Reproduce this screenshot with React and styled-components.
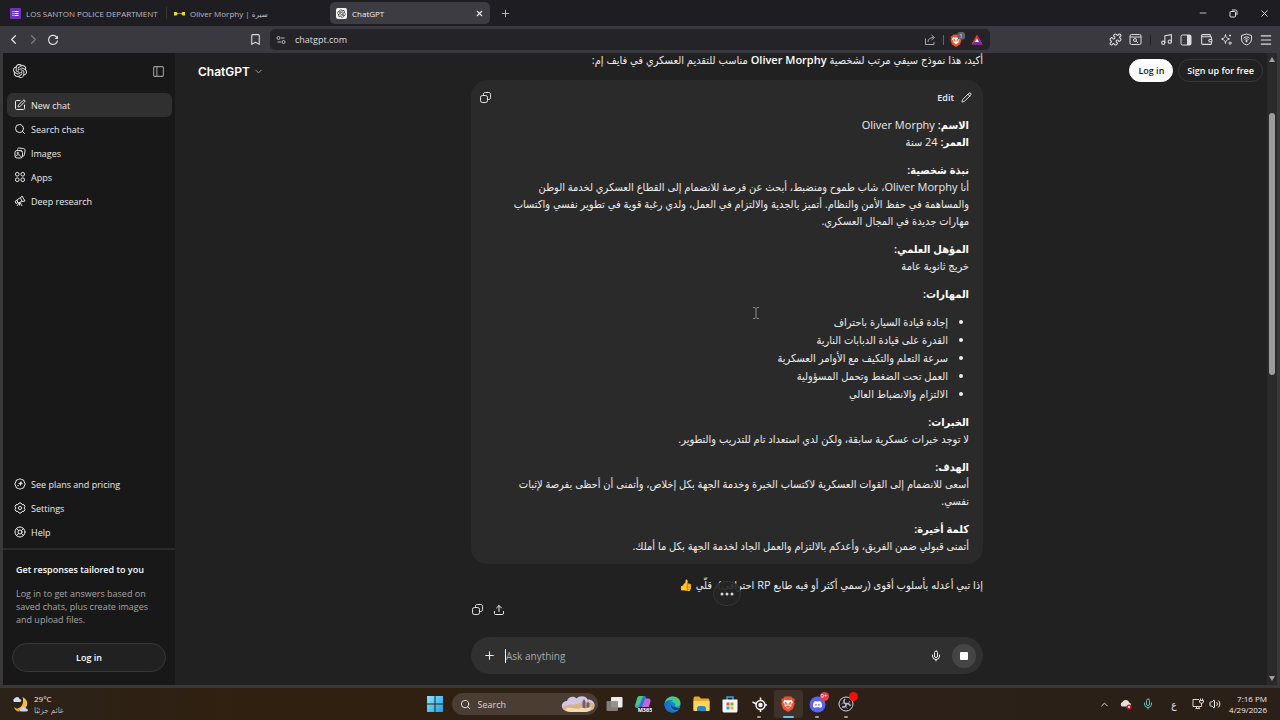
import styled, { createGlobalStyle, css } from "styled-components";
import {
  Bookmark, ChevronDown, ChevronLeft, ChevronRight, ChevronUp, LifeBuoy, Menu, Mic, Minus,
  Music, PanelLeft, Pencil, Plus, Puzzle, Search, SquarePen, Upload, Volume2, Wallet, X,
} from "lucide-react";
import { FaDiscord } from "react-icons/fa";

const GlobalStyle = createGlobalStyle`
  *, *::before, *::after {
    box-sizing: border-box;
  }
  body {
    margin: 0;
    background: #1e1d22;
    color: #ececec;
    font-family: "Open Sans", "DejaVu Sans Condensed", "DejaVu Sans", sans-serif;
    font-size: 9px;
  }
  button, input {
    font: inherit;
    color: inherit;
    border: 0;
    padding: 0;
    margin: 0;
    background: none;
  }
  b {
    font-weight: 600;
    color: #fff;
  }
  svg {
    display: block;
    flex: none;
  }
`;

const Desktop = styled.div`
  display: flex;
  flex-direction: column;
  height: 100vh;
  overflow: hidden;
`;

/* ---------- tab strip ---------- */

const TabStrip = styled.div`
  display: flex;
  align-items: center;
  height: 26px;
  padding-left: 4px;
  background: #1e1d22;
`;

const Tab = styled.button`
  display: flex;
  align-items: center;
  gap: 5px;
  flex: 0 1 160px;
  min-width: 0;
  height: 22px;
  margin-right: 2px;
  padding: 0 6px;
  border-radius: 5px;
  font-size: 8px;
  color: ${(p) => (p.$active ? "#f0f0f2" : "#bdbcc2")};
  background: ${(p) => (p.$active ? "#3d3c42" : "transparent")};
  text-align: left;
  white-space: nowrap;
`;

const TabTitle = styled.span`
  flex: 1;
`;

const TabDivider = styled.span`
  width: 1px;
  height: 12px;
  margin-right: 1px;
  background: #35343a;
`;

const TabButton = styled.button`
  display: grid;
  place-items: center;
  width: 26px;
  height: 22px;
  color: #bdbcc2;
`;

const WindowButtons = styled.div`
  display: flex;
  margin-left: auto;
`;

const WindowButton = styled.button`
  display: grid;
  place-items: center;
  width: 31px;
  height: 26px;
  color: #dedee0;
`;

/* ---------- toolbar ---------- */

const Toolbar = styled.div`
  display: grid;
  grid-template-columns: 270px minmax(0, 1fr) 290px;
  align-items: center;
  height: 27px;
  background: #3a393f;
`;

const ToolGroup = styled.div`
  display: flex;
  align-items: center;
  padding: ${(p) => (p.$end ? "0 4px 0 0" : "0 5px 0 3px")};
  justify-content: ${(p) => (p.$end ? "flex-end" : "flex-start")};
`;

const ToolButton = styled.button`
  display: grid;
  place-items: center;
  width: 20px;
  height: 20px;
  color: ${(p) => (p.$dim ? "#7b7a80" : "#dddce0")};
  ${(p) => p.$push && css`margin-left: auto;`}
`;

const ToolDivider = styled.span`
  width: 1px;
  height: 10px;
  margin: 0 ${(p) => p.$space || 5}px;
  background: ${(p) => (p.$light ? "#66656b" : "#242328")};
`;

const AddressBar = styled.div`
  display: flex;
  align-items: center;
  height: 21px;
  padding: 0 3px 0 6px;
  border-radius: 5px;
  background: #242328;
`;

const AddressInput = styled.input`
  flex: 1;
  min-width: 0;
  margin-left: 9px;
  font-size: 9px;
  color: #dcdce0;
  outline: none;
`;

/* ---------- page ---------- */

const PageFrame = styled.div`
  display: flex;
  flex: 1;
  min-height: 0;
  border: 3px solid #3a383b;
  border-top: 0;
  border-bottom-color: #3b3735;
`;

const Sidebar = styled.aside`
  display: flex;
  flex-direction: column;
  flex: 0 0 172px;
  background: #181818;
`;

const SidebarHead = styled.div`
  display: flex;
  align-items: center;
  justify-content: space-between;
  height: 36px;
  padding: 0 10px;
  margin-bottom: 4px;
`;

const IconButton = styled.button`
  display: grid;
  place-items: center;
  color: ${(p) => p.$color || "#ececec"};
`;

const Nav = styled.nav`
  display: flex;
  flex-direction: column;
  padding: 0 3px 0 4px;
`;

const NavItem = styled.a`
  display: flex;
  align-items: center;
  gap: 5px;
  height: 24px;
  padding: 0 7px;
  border-radius: 6px;
  color: #ececec;
  text-decoration: none;
  background: ${(p) => (p.$active ? "#303030" : "transparent")};
`;

const Spacer = styled.div`
  flex: 1;
`;

const Promo = styled.section`
  margin-top: 4px;
  padding: 13px 9px;
  border-top: 2px solid #2b2b2b;
`;

const PromoTitle = styled.h2`
  margin: 0 4px 10px;
  font-size: 9px;
  line-height: 14px;
  font-weight: 600;
  color: #fff;
`;

const PromoText = styled.p`
  margin: 0 4px 17px;
  line-height: 13px;
  color: #a6a6a6;
`;

const PillButton = styled.button`
  height: ${(p) => (p.$wide ? 29 : 23)}px;
  width: ${(p) => (p.$wide ? "100%" : "auto")};
  padding: 0 8px;
  border-radius: 15px;
  border: 1px solid ${(p) => (p.$solid ? "#fff" : "#383838")};
  color: ${(p) => (p.$solid ? "#111" : "#fff")};
  background: ${(p) => (p.$solid ? "#fff" : p.$wide ? "#212121" : "transparent")};
  font-weight: 600;
  white-space: nowrap;
`;

const Main = styled.main`
  display: grid;
  grid-template-columns: minmax(0, 1fr) minmax(0, 512px) minmax(0, 1fr);
  flex: 1;
  min-width: 0;
  padding-left: 2px;
  overflow: hidden;
  background: #212121;
`;

const ModelButton = styled.button`
  display: flex;
  align-items: center;
  align-self: start;
  gap: 3px;
  height: 36px;
  margin-left: 21px;
  font-family: Inter, sans-serif;
  font-size: 12px;
  font-weight: 600;
  color: #fff;
`;

const RightColumn = styled.div`
  display: flex;
  align-items: stretch;
  justify-content: flex-end;
`;

const AuthButtons = styled.div`
  display: flex;
  gap: 5px;
  height: 23px;
  margin: 6px 4px 0 0;
`;

const ScrollTrack = styled.div`
  display: flex;
  flex-direction: column;
  align-items: center;
  flex: 0 0 10px;
  padding: 4px 0;
  background: #2a2a2a;
`;

const ScrollThumb = styled.div`
  width: 6px;
  height: 262px;
  margin-top: 51px;
  border-radius: 3px;
  background: #9b9b9b;
`;

const ScrollArrow = styled.span`
  width: 0;
  height: 0;
  border: 3px solid transparent;
  ${(p) => (p.$down
    ? css`margin-top: auto; border-top: 5px solid #9f9f9f; border-bottom: 0;`
    : css`border-bottom: 5px solid #9f9f9f; border-top: 0;`)}
`;

/* the conversation is scrolled, so its first line starts just under the toolbar */
const Thread = styled.div`
  position: relative;
  display: flex;
  flex-direction: column;
  min-height: 0;
  margin-top: -2px;
  padding-bottom: 11px;
`;

const Line = styled.p`
  margin: 0;
  font-size: 11px;
  line-height: 17px;
  direction: rtl;
  color: #ececec;
`;

const Card = styled.article`
  margin: 12px 0;
  padding: 7px 14px 10px;
  border-radius: 16px;
  background: #2a2a2a;
`;

const CardHead = styled.header`
  display: flex;
  align-items: center;
  justify-content: space-between;
  height: 20px;
  margin: 0 -3px 9px -6px;
`;

const EditButton = styled.button`
  display: flex;
  align-items: center;
  gap: 7px;
  font-weight: 600;
`;

const CardBody = styled.div`
  display: flex;
  flex-direction: column;
  gap: 11px;
`;

const Skills = styled.ul`
  display: flex;
  flex-direction: column;
  gap: 1px;
  margin: 0;
  padding: 0 21px 0 0;
  direction: rtl;
  font-size: 11px;
  line-height: 17px;
`;

const MessageActions = styled.div`
  display: flex;
  gap: 9px;
  margin: 10px 0 0;
`;

const Composer = styled.form`
  display: flex;
  align-items: center;
  height: 37px;
  margin-top: auto;
  padding: 0 7px 0 12px;
  border-radius: 19px;
  background: #303030;
`;

const Caret = styled.span`
  width: 1px;
  height: 14px;
  margin-left: 9px;
  background: #fff;
`;

const PromptInput = styled.input`
  flex: 1;
  min-width: 0;
  font-size: 10px;
  outline: none;
  &::placeholder {
    color: #a9a9a9;
    opacity: 1;
  }
`;

const StopButton = styled.button`
  display: grid;
  place-items: center;
  width: 24px;
  height: 24px;
  margin-left: 10px;
  border-radius: 50%;
  background: #454545;
`;

const JumpButton = styled.button`
  position: absolute;
  left: calc(50% - 14px);
  bottom: 79px;
  display: grid;
  place-items: center;
  width: 28px;
  height: 25px;
  border: 1px solid #363636;
  border-radius: 13px;
  background: #242424e8;
`;

const TextCursor = styled.svg`
  position: absolute;
  left: 282px;
  top: 256px;
`;

/* ---------- taskbar ---------- */

const Taskbar = styled.footer`
  display: grid;
  grid-template-columns: 1fr auto 1fr;
  align-items: center;
  height: 32px;
  padding-left: 6px;
  background: linear-gradient(90deg, #2b2219, #30200f 20%, #2d2018 60%, #2a2019);
`;

const Weather = styled.div`
  display: flex;
  align-items: center;
  gap: 5px;
  padding-left: 6px;
  font-size: 8px;
  line-height: 11px;
`;

const WeatherText = styled.div`
  color: ${(p) => (p.$muted ? "#b9b2ab" : "#f0eeeb")};
`;

const Apps = styled.div`
  display: flex;
  align-items: center;
`;

const SearchBox = styled.label`
  display: flex;
  align-items: center;
  gap: 7px;
  width: 146px;
  height: 22px;
  margin: 0 2px 0 8px;
  padding: 0 2px 0 8px;
  border-radius: 11px;
  background: #4a3d33;
`;

const SearchInput = styled.input`
  flex: 1;
  min-width: 0;
  font-size: 9px;
  outline: none;
  &::placeholder {
    color: #dcd6d0;
    opacity: 1;
  }
`;

const AppButton = styled.button`
  position: relative;
  display: grid;
  place-items: center;
  width: ${(p) => (p.$start ? 18 : 29)}px;
  height: 28px;
  border-radius: 3px;
  background: ${(p) => (p.$active ? "#3f3229" : "transparent")};
  &::after {
    content: "";
    position: absolute;
    bottom: 0;
    display: ${(p) => (p.$running ? "block" : "none")};
    width: ${(p) => (p.$active ? 11 : 4)}px;
    height: 2px;
    border-radius: 1px;
    background: ${(p) => (p.$active ? "#60c4f5" : "#a39a92")};
  }
`;

const Badge = styled.span`
  position: absolute;
  top: 2px;
  right: 3px;
  width: 9px;
  height: 9px;
  border-radius: 50%;
  background: ${(p) => p.$color};
  font-size: 6px;
  line-height: 9px;
  color: #fff;
`;

const Tray = styled.div`
  display: flex;
  align-items: center;
  justify-content: flex-end;
  padding-right: 13px;
`;

const TrayButton = styled.button`
  display: grid;
  place-items: center;
  width: ${(p) => p.$w || 22}px;
  height: 24px;
  font-size: 10px;
`;

const Clock = styled.div`
  min-width: 44px;
  font-size: 8px;
  line-height: 11px;
  text-align: right;
`;

/* ---------- drawings ---------- */

const openAiPath = "M22.2819 9.8211a5.9847 5.9847 0 0 0-.5157-4.9108 6.0462 6.0462 0 0 0-6.5098-2.9A6.0651 6.0651 0 0 0 4.9807 4.1818a5.9847 5.9847 0 0 0-3.9977 2.9 6.0462 6.0462 0 0 0 .7427 7.0966 5.98 5.98 0 0 0 .511 4.9107 6.051 6.051 0 0 0 6.5146 2.9001A5.9847 5.9847 0 0 0 13.2599 24a6.0557 6.0557 0 0 0 5.7718-4.2058 5.9894 5.9894 0 0 0 3.9977-2.9001 6.0557 6.0557 0 0 0-.7475-7.0729zm-9.022 12.6081a4.4755 4.4755 0 0 1-2.8764-1.0408l.1419-.0804 4.7783-2.7582a.7948.7948 0 0 0 .3927-.6813v-6.7369l2.02 1.1686a.071.071 0 0 1 .038.052v5.5826a4.504 4.504 0 0 1-4.4945 4.4944zm-9.6607-4.1254a4.4708 4.4708 0 0 1-.5346-3.0137l.142.0852 4.783 2.7582a.7712.7712 0 0 0 .7806 0l5.8428-3.3685v2.3324a.0804.0804 0 0 1-.0332.0615L9.74 19.9502a4.4992 4.4992 0 0 1-6.1408-1.6464zM2.3408 7.8956a4.485 4.485 0 0 1 2.3655-1.9728V11.6a.7664.7664 0 0 0 .3879.6765l5.8144 3.3543-2.0201 1.1685a.0757.0757 0 0 1-.071 0l-4.8303-2.7865A4.504 4.504 0 0 1 2.3408 7.872zm16.5963 3.8558L13.1038 8.364 15.1192 7.2a.0757.0757 0 0 1 .071 0l4.8303 2.7913a4.4944 4.4944 0 0 1-.6765 8.1042v-5.6772a.79.79 0 0 0-.407-.667zm2.0107-3.0231l-.142-.0852-4.7735-2.7818a.7759.7759 0 0 0-.7854 0L9.409 9.2297V6.8974a.0662.0662 0 0 1 .0284-.0615l4.8303-2.7866a4.4992 4.4992 0 0 1 6.6802 4.66zM8.3065 12.863l-2.02-1.1638a.0804.0804 0 0 1-.038-.0567V6.0742a4.4992 4.4992 0 0 1 7.3757-3.4537l-.142.0805L8.704 5.459a.7948.7948 0 0 0-.3927.6813zm1.0976-2.3654l2.602-1.4998 2.6069 1.4998v2.9994l-2.5974 1.4997-2.6067-1.4997Z";

const OpenAiLogo = () => (
  <svg width="14" height="14" viewBox="0 0 24 24">
    <path fill="#ececec" d={openAiPath} />
  </svg>
);

const ChatFavicon = () => (
  <svg width="11" height="11" viewBox="0 0 22 22">
    <rect width="22" height="22" rx="4" fill="#f4f4f4" />
    <g transform="translate(3 3) scale(.67)"><path fill="#222" d={openAiPath} /></g>
  </svg>
);

const FormFavicon = () => (
  <svg width="11" height="11" viewBox="0 0 22 22">
    <rect width="22" height="22" rx="2" fill="#6c35b5" />
    <path d="M5 7h2M9 7h8M5 11h2M9 11h8M5 15h2M9 15h8" stroke="#fff" strokeWidth="2" />
  </svg>
);

const DotsFavicon = () => (
  <svg width="11" height="11" viewBox="0 0 22 22">
    <path d="M0 8h5l3 3-3 4H0zM22 8h-5l-3 3 3 4h5z" fill="#ecdc21" />
    <path d="M7 11h8" stroke="#9c9220" strokeWidth="2" />
  </svg>
);

const ReloadIcon = () => (
  <svg width="12" height="12" viewBox="0 0 24 24" fill="none" stroke="currentColor" strokeWidth="2.4">
    <path d="M21 13a9 9 0 1 1-3-8l3 3" />
    <path d="M22 3v7h-7z" fill="currentColor" stroke="none" />
  </svg>
);

const SiteIcon = () => (
  <svg width="10" height="10" viewBox="0 0 20 20" fill="none" stroke="#bdbcc2" strokeWidth="2">
    <circle cx="5" cy="6" r="3" /><path d="M10 6h7M3 14h7" /><circle cx="15" cy="14" r="3" />
  </svg>
);

const ShareArrow = () => (
  <svg width="12" height="12" viewBox="0 0 24 24" fill="none" stroke="#aaa9af" strokeWidth="2">
    <path d="M3 9v12h17v-5M8 16c0-6 4-9 11-9M15 2l6 5-6 5" />
  </svg>
);

const BraveLion = () => (
  <svg width="16" height="16" viewBox="0 0 26 26">
    <path d="M8 1h10l3 3 3 1-1 4 1 3-3 9-8 5-8-5-3-9 1-3-1-4 3-1z" fill="#f4502a" />
    <path d="M7 6l4 1h4l4-1 2 5-3 3 1 2-4 3-2 2-2-2-4-3 1-2-3-3z" fill="#fff" />
    <path d="M8 10l3 1.500-1 3zM18 10l-3 1.500 1 3zM13 12v4M10 17l3-1 3 1-3 2z" fill="#f4502a" stroke="#f4502a" />
  </svg>
);

const ShieldCount = () => (
  <svg width="16" height="15" viewBox="0 0 32 30">
    <g transform="translate(1 4)">
      <path d="M8 1h10l3 3 3 1-1 4 1 3-3 9-8 5-8-5-3-9 1-3-1-4 3-1z" fill="#f4502a" />
      <path d="M7 6l4 1h4l4-1 2 5-3 3 1 2-4 3-2 2-2-2-4-3 1-2-3-3z" fill="#fff" />
      <path d="M8 10l3 1.500-1 3zM18 10l-3 1.500 1 3zM13 12v4" fill="#f4502a" stroke="#f4502a" />
    </g>
    <rect x="17" y="0" width="15" height="15" rx="5" fill="#63636b" />
    <text x="24" y="12" textAnchor="middle" fontSize="12" fill="#e4e4e8">1</text>
  </svg>
);

const BatTriangle = () => (
  <svg width="12" height="11" viewBox="0 0 24 22">
    <path d="M12 1L1 21h22z" fill="#ed3f2b" />
    <path d="M12 1l11 20H12z" fill="#a8268e" />
    <path d="M1 21h22l-6-5H7z" fill="#6b2fae" />
    <path d="M12 9l-4 7h8z" fill="#fff" />
  </svg>
);

const SearchTabs = () => (
  <svg width="13" height="13" viewBox="0 0 26 26" fill="none" stroke="currentColor" strokeWidth="2">
    <rect x="2" y="3" width="22" height="20" rx="3" /><path d="M2 8h22" />
    <circle cx="12" cy="14" r="3" /><path d="M14.500 16.500l3.500 3.500" />
  </svg>
);

const SidePanel = () => (
  <svg width="12" height="12" viewBox="0 0 24 24">
    <rect x="2" y="2" width="20" height="20" rx="3" fill="none" stroke="currentColor" strokeWidth="2" />
    <path d="M14 2h8v20h-8z" fill="currentColor" />
  </svg>
);

const LeoIcon = () => (
  <svg width="13" height="13" viewBox="0 0 26 26" fill="none" stroke="currentColor" strokeWidth="2">
    <path d="M11 3c1 6 2 7 8 9-6 2-7 3-8 9-1-6-2-7-8-9 6-2 7-3 8-9z" />
    <path d="M20 17v7M17 20h7M20 3v4M18 5h4" />
  </svg>
);

const VpnIcon = () => (
  <svg width="13" height="13" viewBox="0 0 26 26" fill="none" stroke="currentColor" strokeWidth="2">
    <path d="M13 2l10 3v7c0 6-4 10-10 12C7 22 3 18 3 12V5z" />
    <path d="M7 10c4-3 8-3 12 0M9 13c3-2 5-2 8 0" /><circle cx="13" cy="16" r="1.500" fill="currentColor" />
  </svg>
);

const RestoreIcon = () => (
  <svg width="9" height="9" viewBox="0 0 18 18" fill="none" stroke="currentColor" strokeWidth="2">
    <rect x="2" y="5" width="11" height="11" rx="2" /><path d="M6 2h7a3 3 0 0 1 3 3v7" />
  </svg>
);

const PhotosIcon = () => (
  <svg width="12" height="12" viewBox="0 0 24 24" fill="none" stroke="currentColor" strokeWidth="1.900">
    <path d="M7 5c0-2 1-3 3-3l9 1c2 0 3 2 3 4l-1 8c0 2-1 3-3 3" />
    <rect x="2" y="7" width="15" height="15" rx="4" /><circle cx="7.500" cy="12" r="1.500" />
    <path d="M3 19c4-5 8-5 12 2M10 7l6 1" />
  </svg>
);

const AppsIcon = () => (
  <svg width="12" height="12" viewBox="0 0 24 24" fill="none" stroke="currentColor" strokeWidth="2">
    <circle cx="6.500" cy="6.500" r="3.700" /><circle cx="17.500" cy="6.500" r="3.700" />
    <circle cx="6.500" cy="17.500" r="3.700" /><circle cx="17.500" cy="17.500" r="3.700" />
  </svg>
);

const TelescopeIcon = () => (
  <svg width="12" height="12" viewBox="0 0 24 24" fill="none" stroke="currentColor" strokeWidth="1.900" strokeLinejoin="round">
    <path d="M16 2l6 10-6 1-3-7zM13 5l-7 5 2 6 8-3M6 10l-4 3 2 4 4-2M11 15l-5 7M12 15l4 7M11 15v6" />
  </svg>
);

const PlansIcon = () => (
  <svg width="12" height="12" viewBox="0 0 24 24" fill="none" stroke="currentColor" strokeWidth="2" strokeLinejoin="round">
    <path d="M12 1.500l3 1.500 4 1 1.500 4 2 4-2 4-1.500 4-4 1-3 1.500-3-1.500-4-1-1.500-4-2-4 2-4L5 4l4-1z" />
    <path d="M14 7l1 3 2 1-3 1-1 3-1-3-3-1 3-1zM8 14v3M7 15h3" fill="currentColor" strokeWidth="1" />
  </svg>
);

const GearIcon = () => (
  <svg width="12" height="12" viewBox="0 0 24 24" fill="none" stroke="currentColor" strokeWidth="2" strokeLinejoin="round">
    <path d="M10 2h4l2 3 4 .5 2 3.500-2 3 2 3-2 3.500-4 .5-2 3h-4l-2-3-4-.5L2 15l2-3-2-3 2-3.500L8 5z" />
    <circle cx="12" cy="12" r="3.200" />
  </svg>
);

const CopyIcon = () => (
  <svg width="13" height="13" viewBox="0 0 26 26" fill="none" stroke="currentColor" strokeWidth="2">
    <rect x="3" y="9" width="14" height="14" rx="4" />
    <path d="M9 9V7c0-3 1-4 4-4h6c3 0 4 1 4 4v6c0 3-1 4-4 4h-2" />
  </svg>
);

const WeatherIcon = () => (
  <svg width="17" height="17" viewBox="0 0 34 34">
    <path d="M21 2c8 3 12 12 8 19-3 6-12 9-19 4 8 0 15-10 11-23z" fill="#f5b942" />
    <path d="M4 12a5 5 0 0 1 2-8c4-4 9-1 9 2 4 0 5 5 1 6z" fill="#cfe0f5" />
    <path d="M17 31a5 5 0 0 1 2-8c4-3 8-1 9 2 5 0 5 6 1 6z" fill="#c3d5ee" />
    <path d="M4 22c5 4 9 4 13 3l-2 6c-6 0-10-4-11-9z" fill="#f5a13a" />
  </svg>
);

const WindowsIcon = () => (
  <svg width="16" height="16" viewBox="0 0 16 16">
    <defs>
      <linearGradient id="win" x1="0" y1="0" x2="1" y2="1">
        <stop stopColor="#8be3ff" /><stop offset="1" stopColor="#1c9fe8" />
      </linearGradient>
    </defs>
    <path d="M0 0h7.500v7.500H0zM8.500 0H16v7.500H8.500zM0 8.500h7.500V16H0zM8.500 8.500H16V16H8.500z" fill="url(#win)" />
  </svg>
);

const SearchArt = () => (
  <svg width="35" height="18" viewBox="0 0 70 36">
    <path d="M6 30C-2 24 2 12 12 12 15 2 27 2 31 7c6-7 20-5 22 2 12-1 18 10 11 20z" fill="#d3c5e6" />
    <path d="M4 24c13-8 23-3 31-7s18-4 32 1c1 9-6 15-14 15H15C8 33 4 29 4 24z" fill="#d9b28b" />
    <path d="M43 30V13l3-5 3 5v17zM51 30V17l3-4 3 4v13z" fill="#705f6c" />
    <path d="M8 28c12-7 22 4 33-3 10 3 15 0 20-2-1 8-7 11-12 11H19c-5 0-9-2-11-6z" fill="#f0dcae" />
  </svg>
);

const TaskViewIcon = () => (
  <svg width="17" height="16" viewBox="0 0 34 32">
    <rect x="10" y="2" width="23" height="21" rx="2" fill="#ededed" />
    <rect x="1" y="10" width="23" height="20" rx="2" fill="#8b8782" opacity=".9" />
  </svg>
);

const CopilotIcon = () => (
  <svg width="18" height="18" viewBox="0 0 36 36">
    <path d="M11 2h9c3 0 4 2 3 5l-5 15c-1 3-3 4-6 4H6c-4 0-5-3-4-6L6 7c1-3 2-5 5-5z" fill="#26a6e6" />
    <path d="M11 2h7c-4 4-5 15-9 19H3L7 7c1-3 2-5 4-5z" fill="#54c66b" />
    <path d="M22 7h6c4 0 6 3 5 6l-3 10c-1 3-3 4-6 4h-9z" fill="#c763dc" />
    <path d="M19 2c5 0 5 5 9 5h-6l-7 19H9z" fill="#3766d6" />
    <rect x="9" y="24" width="26" height="11" fill="#2d2018" />
    <text x="22" y="34" textAnchor="middle" fontSize="11" fontWeight="700" fill="#fff">M365</text>
  </svg>
);

const EdgeIcon = () => (
  <svg width="17" height="17" viewBox="0 0 34 34">
    <circle cx="17" cy="17" r="16" fill="#1686d9" />
    <path d="M1 16C3 5 10 1 18 1c9 0 15 6 15 13 0 6-5 9-11 7 3-4-1-9-7-9S4 14 1 16z" fill="#43cf83" />
    <path d="M1 16C4 7 14 7 19 10c-7-1-10 5-8 12 2 6 8 9 14 9C12 37 0 28 1 16z" fill="#1c70c7" />
    <path d="M22 21c-3 2-7 0-6-4-5 4 1 11 8 11 3 0 6-2 7-4-3 1-6 0-9-3z" fill="#173f70" />
  </svg>
);

const FolderIcon = () => (
  <svg width="17" height="16" viewBox="0 0 34 32">
    <path d="M1 4l2-3h9l4 4h15l2 3v22H1z" fill="#e6a92d" />
    <path d="M1 10h32v18l-2 2H3l-2-2z" fill="#ffd45b" />
    <path d="M8 30v-7l3-3h12l3 3v7z" fill="#2389cf" />
  </svg>
);

const StoreIcon = () => (
  <svg width="16" height="17" viewBox="0 0 32 34">
    <path d="M10 8V2h12v6" fill="none" stroke="#31a8e8" strokeWidth="3" />
    <path d="M1 7h30v22c0 3-1 4-4 4H5c-3 0-4-1-4-4z" fill="#f3f5f7" />
    <path d="M9 13h6v6H9z" fill="#e9502d" /><path d="M17 13h6v6h-6z" fill="#73b72b" />
    <path d="M9 21h6v6H9z" fill="#29a4e8" /><path d="M17 21h6v6h-6z" fill="#f4b51e" />
  </svg>
);

const CrosshairIcon = () => (
  <svg width="15" height="15" viewBox="0 0 30 30" fill="none" stroke="#f4f4f4" strokeWidth="3">
    <circle cx="17" cy="16" r="9" /><circle cx="17" cy="16" r="3" fill="#f4f4f4" />
    <path d="M17 1v6M17 25v5M26 16h4M1 10l8 4" />
  </svg>
);

const ObsIcon = () => (
  <svg width="16" height="16" viewBox="0 0 32 32">
    <circle cx="16" cy="16" r="14" fill="#211e22" stroke="#d7d7d7" strokeWidth="2" />
    <path d="M14 6c-4 4-2 9 2 10M25 20c-2-5-7-6-9-4M8 22c6 1 9-2 8-6" fill="none" stroke="#bfbfc3" strokeWidth="3" />
    <path d="M16 16c4 0 7-2 7-6M16 16c-2 4 0 8 3 9M16 16c-3-3-7-3-9 0" fill="none" stroke="#bfbfc3" strokeWidth="1.500" />
  </svg>
);

const CloudIcon = () => (
  <svg width="12" height="11" viewBox="0 0 24 22">
    <path d="M4 15a5 5 0 0 1 1-9c4-7 13-4 13 1 5 1 5 8 0 8z" fill="#e4e0dc" />
    <circle cx="18" cy="16" r="5" fill="#d41635" /><path d="M16 14l4 4m0-4l-4 4" stroke="#fff" strokeWidth="1.500" />
  </svg>
);

const NetworkIcon = () => (
  <svg width="12" height="12" viewBox="0 0 24 24" fill="none" stroke="#ded8d2" strokeWidth="2">
    <path d="M14 3H2v14h17v-5M7 21h9M9 17v4M14 17v4M17 1v4M21 1v4M15 5h8v3c0 3-8 3-8 0zM19 10v4" />
  </svg>
);

/* ---------- data ---------- */

const mainLinks = [
  { label: "New chat", icon: <SquarePen size={12} />, active: true },
  { label: "Search chats", icon: <Search size={12} /> },
  { label: "Images", icon: <PhotosIcon /> },
  { label: "Apps", icon: <AppsIcon /> },
  { label: "Deep research", icon: <TelescopeIcon /> },
];

const footLinks = [
  { label: "See plans and pricing", icon: <PlansIcon /> },
  { label: "Settings", icon: <GearIcon /> },
  { label: "Help", icon: <LifeBuoy size={12} /> },
];

const skills = [
  "إجادة قيادة السيارة باحتراف",
  "القدرة على قيادة الدبابات النارية",
  "سرعة التعلم والتكيف مع الأوامر العسكرية",
  "العمل تحت الضغط وتحمل المسؤولية",
  "الالتزام والانضباط العالي",
];

const BrowserChrome = () => (
  <>
    <TabStrip>
      <Tab><FormFavicon /><TabTitle>LOS SANTON POLICE DEPARTMENT</TabTitle></Tab>
      <TabDivider />
      <Tab><DotsFavicon /><TabTitle>Oliver Morphy | سيرة</TabTitle></Tab>
      <Tab $active><ChatFavicon /><TabTitle>ChatGPT</TabTitle><X size={9} strokeWidth={3} /></Tab>
      <TabButton aria-label="New tab"><Plus size={11} /></TabButton>
      <WindowButtons>
        <WindowButton aria-label="Minimize"><Minus size={10} /></WindowButton>
        <WindowButton aria-label="Restore"><RestoreIcon /></WindowButton>
        <WindowButton aria-label="Close"><X size={11} /></WindowButton>
      </WindowButtons>
    </TabStrip>
    <Toolbar>
      <ToolGroup>
        <ToolButton aria-label="Back"><ChevronLeft size={15} /></ToolButton>
        <ToolButton aria-label="Forward" $dim><ChevronRight size={15} /></ToolButton>
        <ToolButton aria-label="Reload"><ReloadIcon /></ToolButton>
        <ToolButton aria-label="Bookmark" $push><Bookmark size={13} /></ToolButton>
      </ToolGroup>
      <AddressBar>
        <SiteIcon />
        <AddressInput aria-label="Address" defaultValue="chatgpt.com" />
        <ToolButton aria-label="Share"><ShareArrow /></ToolButton>
        <ToolDivider $light $space={3} />
        <ToolButton aria-label="Shields"><ShieldCount /></ToolButton>
        <ToolButton aria-label="Rewards"><BatTriangle /></ToolButton>
      </AddressBar>
      <ToolGroup $end>
        <ToolButton aria-label="Extensions"><Puzzle size={13} /></ToolButton>
        <ToolButton aria-label="Search tabs"><SearchTabs /></ToolButton>
        <ToolDivider />
        <ToolButton aria-label="Music"><Music size={13} /></ToolButton>
        <ToolButton aria-label="Side panel"><SidePanel /></ToolButton>
        <ToolButton aria-label="Wallet"><Wallet size={13} /></ToolButton>
        <ToolButton aria-label="Assistant"><LeoIcon /></ToolButton>
        <ToolButton aria-label="VPN"><VpnIcon /></ToolButton>
        <ToolButton aria-label="Menu"><Menu size={14} /></ToolButton>
      </ToolGroup>
    </Toolbar>
  </>
);

const ChatSidebar = () => (
  <Sidebar>
    <SidebarHead>
      <OpenAiLogo />
      <IconButton aria-label="Close sidebar" $color="#9b9b9b"><PanelLeft size={13} /></IconButton>
    </SidebarHead>
    <Nav>
      {mainLinks.map((link) => (
        <NavItem href="#" key={link.label} $active={link.active}>{link.icon}{link.label}</NavItem>
      ))}
    </Nav>
    <Spacer />
    <Nav>
      {footLinks.map((link) => (
        <NavItem href="#" key={link.label}>{link.icon}{link.label}</NavItem>
      ))}
    </Nav>
    <Promo>
      <PromoTitle>Get responses tailored to you</PromoTitle>
      <PromoText>Log in to get answers based on saved chats, plus create images and upload files.</PromoText>
      <PillButton $wide>Log in</PillButton>
    </Promo>
  </Sidebar>
);

const Resume = () => (
  <Card>
    <CardHead>
      <IconButton aria-label="Copy"><CopyIcon /></IconButton>
      <EditButton>Edit <Pencil size={11} /></EditButton>
    </CardHead>
    <CardBody>
      <Line><b>الاسم:</b> Oliver Morphy<br /><b>العمر:</b> 24 سنة</Line>
      <Line>
        <b>نبذة شخصية:</b><br />
        أنا Oliver Morphy، شاب طموح ومنضبط، أبحث عن فرصة للانضمام إلى القطاع العسكري لخدمة الوطن<br />
        والمساهمة في حفظ الأمن والنظام. أتميز بالجدية والالتزام في العمل، ولدي رغبة قوية في تطوير نفسي واكتساب<br />
        مهارات جديدة في المجال العسكري.
      </Line>
      <Line><b>المؤهل العلمي:</b><br />خريج ثانوية عامة</Line>
      <Line><b>المهارات:</b></Line>
      <Skills>
        {skills.map((skill) => <li key={skill}>{skill}</li>)}
      </Skills>
      <Line><b>الخبرات:</b><br />لا توجد خبرات عسكرية سابقة، ولكن لدي استعداد تام للتدريب والتطوير.</Line>
      <Line>
        <b>الهدف:</b><br />
        أسعى للانضمام إلى القوات العسكرية لاكتساب الخبرة وخدمة الجهة بكل إخلاص، وأتمنى أن أحظى بفرصة لإثبات<br />
        نفسي.
      </Line>
      <Line><b>كلمة أخيرة:</b><br />أتمنى قبولي ضمن الفريق، وأعدكم بالالتزام والعمل الجاد لخدمة الجهة بكل ما أملك.</Line>
    </CardBody>
  </Card>
);

const ChatPage = () => (
  <Main>
    <ModelButton>ChatGPT <ChevronDown size={11} color="#a5a5a5" /></ModelButton>
    <Thread>
      <Line>أكيد، هذا نموذج سيفي مرتب لشخصية <b>Oliver Morphy</b> مناسب للتقديم العسكري في فايف إم:</Line>
      <Resume />
      <Line>إذا تبي أعدله بأسلوب أقوى (رسمي أكثر أو فيه طابع RP احترافي)، قلّي 👍</Line>
      <MessageActions>
        <IconButton aria-label="Copy message"><CopyIcon /></IconButton>
        <IconButton aria-label="Share message"><Upload size={12} /></IconButton>
      </MessageActions>
      <Composer onSubmit={(e) => e.preventDefault()}>
        <IconButton type="button" aria-label="Add files"><Plus size={13} /></IconButton>
        <Caret />
        <PromptInput aria-label="Prompt" placeholder="Ask anything" />
        <IconButton type="button" aria-label="Dictate"><Mic size={12} /></IconButton>
        <StopButton type="button" aria-label="Stop">
          <svg width="8" height="8"><rect width="8" height="8" rx="1" fill="#fff" /></svg>
        </StopButton>
      </Composer>
      <JumpButton aria-label="Scroll to bottom">
        <svg width="14" height="4" viewBox="0 0 14 4" fill="#d6d6d6">
          <circle cx="2" cy="2" r="1.500" /><circle cx="7" cy="2" r="1.500" /><circle cx="12" cy="2" r="1.500" />
        </svg>
      </JumpButton>
      <TextCursor width="6" height="12" viewBox="0 0 6 12" fill="none" stroke="#8d8d8d">
        <path d="M0 .5h2l1 1 1-1h2M3 1v10M0 11.500h2l1-1 1 1h2" />
      </TextCursor>
    </Thread>
    <RightColumn>
      <AuthButtons>
        <PillButton $solid>Log in</PillButton>
        <PillButton>Sign up for free</PillButton>
      </AuthButtons>
      <ScrollTrack>
        <ScrollArrow />
        <ScrollThumb />
        <ScrollArrow $down />
      </ScrollTrack>
    </RightColumn>
  </Main>
);

const WindowsTaskbar = () => (
  <Taskbar>
    <Weather>
      <WeatherIcon />
      <div>
        <WeatherText>29°C</WeatherText>
        <WeatherText $muted>غائم جزئيًا</WeatherText>
      </div>
    </Weather>
    <Apps>
      <AppButton $start aria-label="Start"><WindowsIcon /></AppButton>
      <SearchBox>
        <Search size={11} />
        <SearchInput aria-label="Search" placeholder="Search" />
        <SearchArt />
      </SearchBox>
      <AppButton aria-label="Task view"><TaskViewIcon /></AppButton>
      <AppButton aria-label="Copilot"><CopilotIcon /></AppButton>
      <AppButton aria-label="Edge"><EdgeIcon /></AppButton>
      <AppButton aria-label="Explorer"><FolderIcon /></AppButton>
      <AppButton aria-label="Store"><StoreIcon /></AppButton>
      <AppButton $running aria-label="Crosshair"><CrosshairIcon /></AppButton>
      <AppButton $running $active aria-label="Brave"><BraveLion /></AppButton>
      <AppButton $running aria-label="Discord">
        <svg width="17" height="17" viewBox="0 0 34 34">
          <circle cx="17" cy="17" r="16" fill="#5865f2" />
          <FaDiscord x="7" y="7" size={20} color="#fff" />
        </svg>
        <Badge $color="#e0404b">9+</Badge>
      </AppButton>
      <AppButton $running aria-label="OBS"><ObsIcon /><Badge $color="#ff0909" /></AppButton>
    </Apps>
    <Tray>
      <TrayButton aria-label="Hidden icons"><ChevronUp size={11} /></TrayButton>
      <TrayButton aria-label="Cloud"><CloudIcon /></TrayButton>
      <TrayButton aria-label="Microphone"><Mic size={12} color="#62c1bb" /></TrayButton>
      <TrayButton $w={30}>ع</TrayButton>
      <TrayButton $w={18} aria-label="Network"><NetworkIcon /></TrayButton>
      <TrayButton $w={16} aria-label="Volume"><Volume2 size={12} /></TrayButton>
      <Clock>7:16 PM<br />4/29/2026</Clock>
    </Tray>
  </Taskbar>
);

function App() {
  return (
    <Desktop>
      <GlobalStyle />
      <BrowserChrome />
      <PageFrame>
        <ChatSidebar />
        <ChatPage />
      </PageFrame>
      <WindowsTaskbar />
    </Desktop>
  );
}

export default App;
